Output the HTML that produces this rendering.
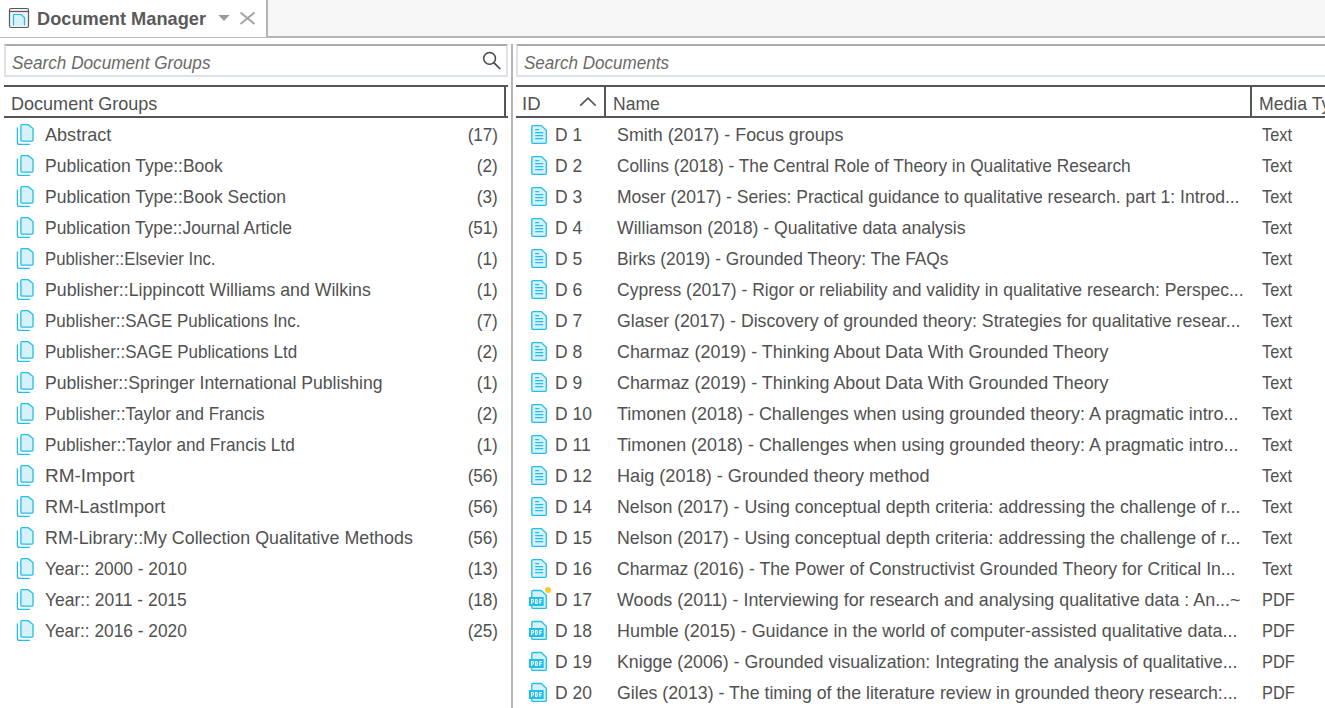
<!DOCTYPE html>
<html><head><meta charset="utf-8">
<style>
*{box-sizing:border-box;margin:0;padding:0}
html,body{width:1325px;height:708px;overflow:hidden;background:#fff;font-family:"Liberation Sans",sans-serif;color:#515151}
.abs{position:absolute}
#tabbar{left:0;top:0;width:1325px;height:38px;background:#f7f7f7}
#tab{left:0;top:0;width:268px;height:38px;background:#fff;border-right:2px solid #b4b4b4;border-bottom:1px solid #bcbcbc}
#tabline{left:268px;top:36px;width:1057px;height:2px;background:#b4b4b4}
.search{top:44px;height:33px;border:2px solid #dde2ea;border-top-color:#a9acb2;background:#fff}
.hdr{top:85px;height:33px;border-top:2px solid #555;border-bottom:2px solid #555}
.vsep{position:absolute;width:2px;height:31px;background:#555}
.t{position:absolute;white-space:nowrap;font-size:18.6px;line-height:31px;height:31px;transform-origin:0 0}
.ti{font-weight:bold;color:#5a5a5a}
.ph{font-style:italic;color:#6a6a6a}
.ic{position:absolute}
#splitter{left:511px;top:44px;width:2px;height:664px;background:#b4b4b4}
</style></head><body>
<div id="tabbar" class="abs"></div>
<div id="tab" class="abs"></div>
<div id="tabline" class="abs"></div>
<svg class="abs" style="left:0;top:0" width="40" height="38">
 <rect x="9.5" y="8.5" width="19" height="19" rx="1.5" fill="#f2f2f2" stroke="#5a5a5a" stroke-width="1.2"/>
 <line x1="9.5" y1="11.5" x2="28.5" y2="11.5" stroke="#5a5a5a" stroke-width="1.2"/>
 <path d="M13.5 25.5 V14.5 H21 L24.5 17.5 V25.5" fill="#d6f1fa" stroke="#1ec0e8" stroke-width="1.2"/>
</svg>
<svg class="abs" style="left:210px;top:0" width="56" height="38">
 <path d="M8.3 15 L19.6 15 L14 21 Z" fill="#9a9a9a"/>
 <path d="M30.5 12.5 L44.5 24 M44.5 12.5 L30.5 24" stroke="#a4a4a4" stroke-width="2"/>
</svg>
<div class="abs search" style="left:4px;width:504px"></div>
<svg class="abs" style="left:478px;top:48px" width="26" height="26">
 <circle cx="11.6" cy="10.4" r="5.9" fill="none" stroke="#444" stroke-width="1.5"/>
 <path d="M15.8 14.6 L22.2 21" stroke="#444" stroke-width="1.7"/>
</svg>
<div class="abs hdr" style="left:4px;width:504px"></div>
<div class="vsep" style="left:504px;top:86px"></div>
<div id="splitter" class="abs"></div>
<div class="abs search" style="left:516px;width:820px"></div>
<div class="abs hdr" style="left:516px;width:820px"></div>
<svg class="abs" style="left:578px;top:96px" width="20" height="14"><path d="M2.2 9.6 L10 2.2 L17.7 9.6" fill="none" stroke="#555" stroke-width="1.6"/></svg>
<div class="vsep" style="left:604px;top:86px"></div>
<div class="vsep" style="left:1250px;top:86px"></div>
<span class="t ti" style="left:37px;top:3px;transform:scaleX(0.9794);">Document Manager</span>
<span class="t ph" style="left:12px;top:47px;transform:scaleX(0.9234);">Search Document Groups</span>
<span class="t ph" style="left:524px;top:47px;transform:scaleX(0.9170);">Search Documents</span>
<span class="t" style="left:10.5px;top:88px;transform:scaleX(0.9702);">Document Groups</span>
<span class="t" style="left:522px;top:88px;transform:scaleX(1.0003);">ID</span>
<span class="t" style="left:613px;top:88px;transform:scaleX(0.9414);">Name</span>
<span class="t" style="left:1259px;top:88px;transform:scaleX(0.95)">Media Type</span>
<svg class="ic" style="left:13px;top:120px" width="22" height="26"><path d="M4.4 7.6 V22.4 Q4.4 24.4 6.4 24.4 H16.9" fill="none" stroke="#1ec0e8" stroke-width="1.3"/><path d="M7.9 5.8 Q7.9 4.7 9 4.7 H15.2 L20 8.6 V20 Q20 21.1 18.9 21.1 H9 Q7.9 21.1 7.9 20 Z" fill="#d6f1fa" stroke="#1ec0e8" stroke-width="1.3"/></svg>
<span class="t" style="left:45px;top:119px;transform:scaleX(0.9721);">Abstract</span>
<span class="t" style="right:827px;top:119px;transform-origin:100% 0;transform:scaleX(0.92)">(17)</span>
<svg class="ic" style="left:13px;top:151px" width="22" height="26"><path d="M4.4 7.6 V22.4 Q4.4 24.4 6.4 24.4 H16.9" fill="none" stroke="#1ec0e8" stroke-width="1.3"/><path d="M7.9 5.8 Q7.9 4.7 9 4.7 H15.2 L20 8.6 V20 Q20 21.1 18.9 21.1 H9 Q7.9 21.1 7.9 20 Z" fill="#d6f1fa" stroke="#1ec0e8" stroke-width="1.3"/></svg>
<span class="t" style="left:45px;top:150px;transform:scaleX(0.9416);">Publication Type::Book</span>
<span class="t" style="right:827px;top:150px;transform-origin:100% 0;transform:scaleX(0.92)">(2)</span>
<svg class="ic" style="left:13px;top:182px" width="22" height="26"><path d="M4.4 7.6 V22.4 Q4.4 24.4 6.4 24.4 H16.9" fill="none" stroke="#1ec0e8" stroke-width="1.3"/><path d="M7.9 5.8 Q7.9 4.7 9 4.7 H15.2 L20 8.6 V20 Q20 21.1 18.9 21.1 H9 Q7.9 21.1 7.9 20 Z" fill="#d6f1fa" stroke="#1ec0e8" stroke-width="1.3"/></svg>
<span class="t" style="left:45px;top:181px;transform:scaleX(0.9410);">Publication Type::Book Section</span>
<span class="t" style="right:827px;top:181px;transform-origin:100% 0;transform:scaleX(0.92)">(3)</span>
<svg class="ic" style="left:13px;top:213px" width="22" height="26"><path d="M4.4 7.6 V22.4 Q4.4 24.4 6.4 24.4 H16.9" fill="none" stroke="#1ec0e8" stroke-width="1.3"/><path d="M7.9 5.8 Q7.9 4.7 9 4.7 H15.2 L20 8.6 V20 Q20 21.1 18.9 21.1 H9 Q7.9 21.1 7.9 20 Z" fill="#d6f1fa" stroke="#1ec0e8" stroke-width="1.3"/></svg>
<span class="t" style="left:45px;top:212px;transform:scaleX(0.9384);">Publication Type::Journal Article</span>
<span class="t" style="right:827px;top:212px;transform-origin:100% 0;transform:scaleX(0.92)">(51)</span>
<svg class="ic" style="left:13px;top:244px" width="22" height="26"><path d="M4.4 7.6 V22.4 Q4.4 24.4 6.4 24.4 H16.9" fill="none" stroke="#1ec0e8" stroke-width="1.3"/><path d="M7.9 5.8 Q7.9 4.7 9 4.7 H15.2 L20 8.6 V20 Q20 21.1 18.9 21.1 H9 Q7.9 21.1 7.9 20 Z" fill="#d6f1fa" stroke="#1ec0e8" stroke-width="1.3"/></svg>
<span class="t" style="left:45px;top:243px;transform:scaleX(0.9015);">Publisher::Elsevier Inc.</span>
<span class="t" style="right:827px;top:243px;transform-origin:100% 0;transform:scaleX(0.92)">(1)</span>
<svg class="ic" style="left:13px;top:275px" width="22" height="26"><path d="M4.4 7.6 V22.4 Q4.4 24.4 6.4 24.4 H16.9" fill="none" stroke="#1ec0e8" stroke-width="1.3"/><path d="M7.9 5.8 Q7.9 4.7 9 4.7 H15.2 L20 8.6 V20 Q20 21.1 18.9 21.1 H9 Q7.9 21.1 7.9 20 Z" fill="#d6f1fa" stroke="#1ec0e8" stroke-width="1.3"/></svg>
<span class="t" style="left:45px;top:274px;transform:scaleX(0.9525);">Publisher::Lippincott Williams and Wilkins</span>
<span class="t" style="right:827px;top:274px;transform-origin:100% 0;transform:scaleX(0.92)">(1)</span>
<svg class="ic" style="left:13px;top:306px" width="22" height="26"><path d="M4.4 7.6 V22.4 Q4.4 24.4 6.4 24.4 H16.9" fill="none" stroke="#1ec0e8" stroke-width="1.3"/><path d="M7.9 5.8 Q7.9 4.7 9 4.7 H15.2 L20 8.6 V20 Q20 21.1 18.9 21.1 H9 Q7.9 21.1 7.9 20 Z" fill="#d6f1fa" stroke="#1ec0e8" stroke-width="1.3"/></svg>
<span class="t" style="left:45px;top:305px;transform:scaleX(0.9122);">Publisher::SAGE Publications Inc.</span>
<span class="t" style="right:827px;top:305px;transform-origin:100% 0;transform:scaleX(0.92)">(7)</span>
<svg class="ic" style="left:13px;top:337px" width="22" height="26"><path d="M4.4 7.6 V22.4 Q4.4 24.4 6.4 24.4 H16.9" fill="none" stroke="#1ec0e8" stroke-width="1.3"/><path d="M7.9 5.8 Q7.9 4.7 9 4.7 H15.2 L20 8.6 V20 Q20 21.1 18.9 21.1 H9 Q7.9 21.1 7.9 20 Z" fill="#d6f1fa" stroke="#1ec0e8" stroke-width="1.3"/></svg>
<span class="t" style="left:45px;top:336px;transform:scaleX(0.9139);">Publisher::SAGE Publications Ltd</span>
<span class="t" style="right:827px;top:336px;transform-origin:100% 0;transform:scaleX(0.92)">(2)</span>
<svg class="ic" style="left:13px;top:368px" width="22" height="26"><path d="M4.4 7.6 V22.4 Q4.4 24.4 6.4 24.4 H16.9" fill="none" stroke="#1ec0e8" stroke-width="1.3"/><path d="M7.9 5.8 Q7.9 4.7 9 4.7 H15.2 L20 8.6 V20 Q20 21.1 18.9 21.1 H9 Q7.9 21.1 7.9 20 Z" fill="#d6f1fa" stroke="#1ec0e8" stroke-width="1.3"/></svg>
<span class="t" style="left:45px;top:367px;transform:scaleX(0.9464);">Publisher::Springer International Publishing</span>
<span class="t" style="right:827px;top:367px;transform-origin:100% 0;transform:scaleX(0.92)">(1)</span>
<svg class="ic" style="left:13px;top:399px" width="22" height="26"><path d="M4.4 7.6 V22.4 Q4.4 24.4 6.4 24.4 H16.9" fill="none" stroke="#1ec0e8" stroke-width="1.3"/><path d="M7.9 5.8 Q7.9 4.7 9 4.7 H15.2 L20 8.6 V20 Q20 21.1 18.9 21.1 H9 Q7.9 21.1 7.9 20 Z" fill="#d6f1fa" stroke="#1ec0e8" stroke-width="1.3"/></svg>
<span class="t" style="left:45px;top:398px;transform:scaleX(0.9155);">Publisher::Taylor and Francis</span>
<span class="t" style="right:827px;top:398px;transform-origin:100% 0;transform:scaleX(0.92)">(2)</span>
<svg class="ic" style="left:13px;top:430px" width="22" height="26"><path d="M4.4 7.6 V22.4 Q4.4 24.4 6.4 24.4 H16.9" fill="none" stroke="#1ec0e8" stroke-width="1.3"/><path d="M7.9 5.8 Q7.9 4.7 9 4.7 H15.2 L20 8.6 V20 Q20 21.1 18.9 21.1 H9 Q7.9 21.1 7.9 20 Z" fill="#d6f1fa" stroke="#1ec0e8" stroke-width="1.3"/></svg>
<span class="t" style="left:45px;top:429px;transform:scaleX(0.9221);">Publisher::Taylor and Francis Ltd</span>
<span class="t" style="right:827px;top:429px;transform-origin:100% 0;transform:scaleX(0.92)">(1)</span>
<svg class="ic" style="left:13px;top:461px" width="22" height="26"><path d="M4.4 7.6 V22.4 Q4.4 24.4 6.4 24.4 H16.9" fill="none" stroke="#1ec0e8" stroke-width="1.3"/><path d="M7.9 5.8 Q7.9 4.7 9 4.7 H15.2 L20 8.6 V20 Q20 21.1 18.9 21.1 H9 Q7.9 21.1 7.9 20 Z" fill="#d6f1fa" stroke="#1ec0e8" stroke-width="1.3"/></svg>
<span class="t" style="left:45px;top:460px;transform:scaleX(1.0192);">RM-Import</span>
<span class="t" style="right:827px;top:460px;transform-origin:100% 0;transform:scaleX(0.92)">(56)</span>
<svg class="ic" style="left:13px;top:492px" width="22" height="26"><path d="M4.4 7.6 V22.4 Q4.4 24.4 6.4 24.4 H16.9" fill="none" stroke="#1ec0e8" stroke-width="1.3"/><path d="M7.9 5.8 Q7.9 4.7 9 4.7 H15.2 L20 8.6 V20 Q20 21.1 18.9 21.1 H9 Q7.9 21.1 7.9 20 Z" fill="#d6f1fa" stroke="#1ec0e8" stroke-width="1.3"/></svg>
<span class="t" style="left:45px;top:491px;transform:scaleX(0.9784);">RM-LastImport</span>
<span class="t" style="right:827px;top:491px;transform-origin:100% 0;transform:scaleX(0.92)">(56)</span>
<svg class="ic" style="left:13px;top:523px" width="22" height="26"><path d="M4.4 7.6 V22.4 Q4.4 24.4 6.4 24.4 H16.9" fill="none" stroke="#1ec0e8" stroke-width="1.3"/><path d="M7.9 5.8 Q7.9 4.7 9 4.7 H15.2 L20 8.6 V20 Q20 21.1 18.9 21.1 H9 Q7.9 21.1 7.9 20 Z" fill="#d6f1fa" stroke="#1ec0e8" stroke-width="1.3"/></svg>
<span class="t" style="left:45px;top:522px;transform:scaleX(0.9594);">RM-Library::My Collection Qualitative Methods</span>
<span class="t" style="right:827px;top:522px;transform-origin:100% 0;transform:scaleX(0.92)">(56)</span>
<svg class="ic" style="left:13px;top:554px" width="22" height="26"><path d="M4.4 7.6 V22.4 Q4.4 24.4 6.4 24.4 H16.9" fill="none" stroke="#1ec0e8" stroke-width="1.3"/><path d="M7.9 5.8 Q7.9 4.7 9 4.7 H15.2 L20 8.6 V20 Q20 21.1 18.9 21.1 H9 Q7.9 21.1 7.9 20 Z" fill="#d6f1fa" stroke="#1ec0e8" stroke-width="1.3"/></svg>
<span class="t" style="left:45px;top:553px;transform:scaleX(0.9309);">Year:: 2000 - 2010</span>
<span class="t" style="right:827px;top:553px;transform-origin:100% 0;transform:scaleX(0.92)">(13)</span>
<svg class="ic" style="left:13px;top:585px" width="22" height="26"><path d="M4.4 7.6 V22.4 Q4.4 24.4 6.4 24.4 H16.9" fill="none" stroke="#1ec0e8" stroke-width="1.3"/><path d="M7.9 5.8 Q7.9 4.7 9 4.7 H15.2 L20 8.6 V20 Q20 21.1 18.9 21.1 H9 Q7.9 21.1 7.9 20 Z" fill="#d6f1fa" stroke="#1ec0e8" stroke-width="1.3"/></svg>
<span class="t" style="left:45px;top:584px;transform:scaleX(0.9395);">Year:: 2011 - 2015</span>
<span class="t" style="right:827px;top:584px;transform-origin:100% 0;transform:scaleX(0.92)">(18)</span>
<svg class="ic" style="left:13px;top:616px" width="22" height="26"><path d="M4.4 7.6 V22.4 Q4.4 24.4 6.4 24.4 H16.9" fill="none" stroke="#1ec0e8" stroke-width="1.3"/><path d="M7.9 5.8 Q7.9 4.7 9 4.7 H15.2 L20 8.6 V20 Q20 21.1 18.9 21.1 H9 Q7.9 21.1 7.9 20 Z" fill="#d6f1fa" stroke="#1ec0e8" stroke-width="1.3"/></svg>
<span class="t" style="left:45px;top:615px;transform:scaleX(0.9309);">Year:: 2016 - 2020</span>
<span class="t" style="right:827px;top:615px;transform-origin:100% 0;transform:scaleX(0.92)">(25)</span>
<svg class="ic" style="left:529.5px;top:124px" width="20" height="22"><path d="M1.8 2.6 Q1.8 1.6 2.8 1.6 H11.4 L16.3 6.2 V18.3 Q16.3 19.3 15.3 19.3 H2.8 Q1.8 19.3 1.8 18.3 Z" fill="#d6f1fa" stroke="#1ec0e8" stroke-width="1.3"/><path d="M5.2 5.7 H9.2 M5.2 8.7 H13.2 M5.2 11.7 H13.2 M5.2 14.7 H13.2" stroke="#1ec0e8" stroke-width="1.2"/></svg>
<span class="t" style="left:555px;top:119px;transform:scaleX(0.94)">D 1</span>
<span class="t" style="left:617px;top:119px;transform:scaleX(0.9613);">Smith (2017) - Focus groups</span>
<span class="t" style="left:1262px;top:119px;transform:scaleX(0.88)">Text</span>
<svg class="ic" style="left:529.5px;top:155px" width="20" height="22"><path d="M1.8 2.6 Q1.8 1.6 2.8 1.6 H11.4 L16.3 6.2 V18.3 Q16.3 19.3 15.3 19.3 H2.8 Q1.8 19.3 1.8 18.3 Z" fill="#d6f1fa" stroke="#1ec0e8" stroke-width="1.3"/><path d="M5.2 5.7 H9.2 M5.2 8.7 H13.2 M5.2 11.7 H13.2 M5.2 14.7 H13.2" stroke="#1ec0e8" stroke-width="1.2"/></svg>
<span class="t" style="left:555px;top:150px;transform:scaleX(0.94)">D 2</span>
<span class="t" style="left:617px;top:150px;transform:scaleX(0.9302);">Collins (2018) - The Central Role of Theory in Qualitative Research</span>
<span class="t" style="left:1262px;top:150px;transform:scaleX(0.88)">Text</span>
<svg class="ic" style="left:529.5px;top:186px" width="20" height="22"><path d="M1.8 2.6 Q1.8 1.6 2.8 1.6 H11.4 L16.3 6.2 V18.3 Q16.3 19.3 15.3 19.3 H2.8 Q1.8 19.3 1.8 18.3 Z" fill="#d6f1fa" stroke="#1ec0e8" stroke-width="1.3"/><path d="M5.2 5.7 H9.2 M5.2 8.7 H13.2 M5.2 11.7 H13.2 M5.2 14.7 H13.2" stroke="#1ec0e8" stroke-width="1.2"/></svg>
<span class="t" style="left:555px;top:181px;transform:scaleX(0.94)">D 3</span>
<span class="t" style="left:617px;top:181px;transform:scaleX(0.9426);">Moser (2017) - Series: Practical guidance to qualitative research. part 1: Introd...</span>
<span class="t" style="left:1262px;top:181px;transform:scaleX(0.88)">Text</span>
<svg class="ic" style="left:529.5px;top:217px" width="20" height="22"><path d="M1.8 2.6 Q1.8 1.6 2.8 1.6 H11.4 L16.3 6.2 V18.3 Q16.3 19.3 15.3 19.3 H2.8 Q1.8 19.3 1.8 18.3 Z" fill="#d6f1fa" stroke="#1ec0e8" stroke-width="1.3"/><path d="M5.2 5.7 H9.2 M5.2 8.7 H13.2 M5.2 11.7 H13.2 M5.2 14.7 H13.2" stroke="#1ec0e8" stroke-width="1.2"/></svg>
<span class="t" style="left:555px;top:212px;transform:scaleX(0.94)">D 4</span>
<span class="t" style="left:617px;top:212px;transform:scaleX(0.9499);">Williamson (2018) - Qualitative data analysis</span>
<span class="t" style="left:1262px;top:212px;transform:scaleX(0.88)">Text</span>
<svg class="ic" style="left:529.5px;top:248px" width="20" height="22"><path d="M1.8 2.6 Q1.8 1.6 2.8 1.6 H11.4 L16.3 6.2 V18.3 Q16.3 19.3 15.3 19.3 H2.8 Q1.8 19.3 1.8 18.3 Z" fill="#d6f1fa" stroke="#1ec0e8" stroke-width="1.3"/><path d="M5.2 5.7 H9.2 M5.2 8.7 H13.2 M5.2 11.7 H13.2 M5.2 14.7 H13.2" stroke="#1ec0e8" stroke-width="1.2"/></svg>
<span class="t" style="left:555px;top:243px;transform:scaleX(0.94)">D 5</span>
<span class="t" style="left:617px;top:243px;transform:scaleX(0.9315);">Birks (2019) - Grounded Theory: The FAQs</span>
<span class="t" style="left:1262px;top:243px;transform:scaleX(0.88)">Text</span>
<svg class="ic" style="left:529.5px;top:279px" width="20" height="22"><path d="M1.8 2.6 Q1.8 1.6 2.8 1.6 H11.4 L16.3 6.2 V18.3 Q16.3 19.3 15.3 19.3 H2.8 Q1.8 19.3 1.8 18.3 Z" fill="#d6f1fa" stroke="#1ec0e8" stroke-width="1.3"/><path d="M5.2 5.7 H9.2 M5.2 8.7 H13.2 M5.2 11.7 H13.2 M5.2 14.7 H13.2" stroke="#1ec0e8" stroke-width="1.2"/></svg>
<span class="t" style="left:555px;top:274px;transform:scaleX(0.94)">D 6</span>
<span class="t" style="left:617px;top:274px;transform:scaleX(0.9414);">Cypress (2017) - Rigor or reliability and validity in qualitative research: Perspec...</span>
<span class="t" style="left:1262px;top:274px;transform:scaleX(0.88)">Text</span>
<svg class="ic" style="left:529.5px;top:310px" width="20" height="22"><path d="M1.8 2.6 Q1.8 1.6 2.8 1.6 H11.4 L16.3 6.2 V18.3 Q16.3 19.3 15.3 19.3 H2.8 Q1.8 19.3 1.8 18.3 Z" fill="#d6f1fa" stroke="#1ec0e8" stroke-width="1.3"/><path d="M5.2 5.7 H9.2 M5.2 8.7 H13.2 M5.2 11.7 H13.2 M5.2 14.7 H13.2" stroke="#1ec0e8" stroke-width="1.2"/></svg>
<span class="t" style="left:555px;top:305px;transform:scaleX(0.94)">D 7</span>
<span class="t" style="left:617px;top:305px;transform:scaleX(0.9516);">Glaser (2017) - Discovery of grounded theory: Strategies for qualitative resear...</span>
<span class="t" style="left:1262px;top:305px;transform:scaleX(0.88)">Text</span>
<svg class="ic" style="left:529.5px;top:341px" width="20" height="22"><path d="M1.8 2.6 Q1.8 1.6 2.8 1.6 H11.4 L16.3 6.2 V18.3 Q16.3 19.3 15.3 19.3 H2.8 Q1.8 19.3 1.8 18.3 Z" fill="#d6f1fa" stroke="#1ec0e8" stroke-width="1.3"/><path d="M5.2 5.7 H9.2 M5.2 8.7 H13.2 M5.2 11.7 H13.2 M5.2 14.7 H13.2" stroke="#1ec0e8" stroke-width="1.2"/></svg>
<span class="t" style="left:555px;top:336px;transform:scaleX(0.94)">D 8</span>
<span class="t" style="left:617px;top:336px;transform:scaleX(0.9620);">Charmaz (2019) - Thinking About Data With Grounded Theory</span>
<span class="t" style="left:1262px;top:336px;transform:scaleX(0.88)">Text</span>
<svg class="ic" style="left:529.5px;top:372px" width="20" height="22"><path d="M1.8 2.6 Q1.8 1.6 2.8 1.6 H11.4 L16.3 6.2 V18.3 Q16.3 19.3 15.3 19.3 H2.8 Q1.8 19.3 1.8 18.3 Z" fill="#d6f1fa" stroke="#1ec0e8" stroke-width="1.3"/><path d="M5.2 5.7 H9.2 M5.2 8.7 H13.2 M5.2 11.7 H13.2 M5.2 14.7 H13.2" stroke="#1ec0e8" stroke-width="1.2"/></svg>
<span class="t" style="left:555px;top:367px;transform:scaleX(0.94)">D 9</span>
<span class="t" style="left:617px;top:367px;transform:scaleX(0.9620);">Charmaz (2019) - Thinking About Data With Grounded Theory</span>
<span class="t" style="left:1262px;top:367px;transform:scaleX(0.88)">Text</span>
<svg class="ic" style="left:529.5px;top:403px" width="20" height="22"><path d="M1.8 2.6 Q1.8 1.6 2.8 1.6 H11.4 L16.3 6.2 V18.3 Q16.3 19.3 15.3 19.3 H2.8 Q1.8 19.3 1.8 18.3 Z" fill="#d6f1fa" stroke="#1ec0e8" stroke-width="1.3"/><path d="M5.2 5.7 H9.2 M5.2 8.7 H13.2 M5.2 11.7 H13.2 M5.2 14.7 H13.2" stroke="#1ec0e8" stroke-width="1.2"/></svg>
<span class="t" style="left:555px;top:398px;transform:scaleX(0.94)">D 10</span>
<span class="t" style="left:617px;top:398px;transform:scaleX(0.9647);">Timonen (2018) - Challenges when using grounded theory: A pragmatic intro...</span>
<span class="t" style="left:1262px;top:398px;transform:scaleX(0.88)">Text</span>
<svg class="ic" style="left:529.5px;top:434px" width="20" height="22"><path d="M1.8 2.6 Q1.8 1.6 2.8 1.6 H11.4 L16.3 6.2 V18.3 Q16.3 19.3 15.3 19.3 H2.8 Q1.8 19.3 1.8 18.3 Z" fill="#d6f1fa" stroke="#1ec0e8" stroke-width="1.3"/><path d="M5.2 5.7 H9.2 M5.2 8.7 H13.2 M5.2 11.7 H13.2 M5.2 14.7 H13.2" stroke="#1ec0e8" stroke-width="1.2"/></svg>
<span class="t" style="left:555px;top:429px;transform:scaleX(0.94)">D 11</span>
<span class="t" style="left:617px;top:429px;transform:scaleX(0.9647);">Timonen (2018) - Challenges when using grounded theory: A pragmatic intro...</span>
<span class="t" style="left:1262px;top:429px;transform:scaleX(0.88)">Text</span>
<svg class="ic" style="left:529.5px;top:465px" width="20" height="22"><path d="M1.8 2.6 Q1.8 1.6 2.8 1.6 H11.4 L16.3 6.2 V18.3 Q16.3 19.3 15.3 19.3 H2.8 Q1.8 19.3 1.8 18.3 Z" fill="#d6f1fa" stroke="#1ec0e8" stroke-width="1.3"/><path d="M5.2 5.7 H9.2 M5.2 8.7 H13.2 M5.2 11.7 H13.2 M5.2 14.7 H13.2" stroke="#1ec0e8" stroke-width="1.2"/></svg>
<span class="t" style="left:555px;top:460px;transform:scaleX(0.94)">D 12</span>
<span class="t" style="left:617px;top:460px;transform:scaleX(0.9753);">Haig (2018) - Grounded theory method</span>
<span class="t" style="left:1262px;top:460px;transform:scaleX(0.88)">Text</span>
<svg class="ic" style="left:529.5px;top:496px" width="20" height="22"><path d="M1.8 2.6 Q1.8 1.6 2.8 1.6 H11.4 L16.3 6.2 V18.3 Q16.3 19.3 15.3 19.3 H2.8 Q1.8 19.3 1.8 18.3 Z" fill="#d6f1fa" stroke="#1ec0e8" stroke-width="1.3"/><path d="M5.2 5.7 H9.2 M5.2 8.7 H13.2 M5.2 11.7 H13.2 M5.2 14.7 H13.2" stroke="#1ec0e8" stroke-width="1.2"/></svg>
<span class="t" style="left:555px;top:491px;transform:scaleX(0.94)">D 14</span>
<span class="t" style="left:617px;top:491px;transform:scaleX(0.9560);">Nelson (2017) - Using conceptual depth criteria: addressing the challenge of r...</span>
<span class="t" style="left:1262px;top:491px;transform:scaleX(0.88)">Text</span>
<svg class="ic" style="left:529.5px;top:527px" width="20" height="22"><path d="M1.8 2.6 Q1.8 1.6 2.8 1.6 H11.4 L16.3 6.2 V18.3 Q16.3 19.3 15.3 19.3 H2.8 Q1.8 19.3 1.8 18.3 Z" fill="#d6f1fa" stroke="#1ec0e8" stroke-width="1.3"/><path d="M5.2 5.7 H9.2 M5.2 8.7 H13.2 M5.2 11.7 H13.2 M5.2 14.7 H13.2" stroke="#1ec0e8" stroke-width="1.2"/></svg>
<span class="t" style="left:555px;top:522px;transform:scaleX(0.94)">D 15</span>
<span class="t" style="left:617px;top:522px;transform:scaleX(0.9560);">Nelson (2017) - Using conceptual depth criteria: addressing the challenge of r...</span>
<span class="t" style="left:1262px;top:522px;transform:scaleX(0.88)">Text</span>
<svg class="ic" style="left:529.5px;top:558px" width="20" height="22"><path d="M1.8 2.6 Q1.8 1.6 2.8 1.6 H11.4 L16.3 6.2 V18.3 Q16.3 19.3 15.3 19.3 H2.8 Q1.8 19.3 1.8 18.3 Z" fill="#d6f1fa" stroke="#1ec0e8" stroke-width="1.3"/><path d="M5.2 5.7 H9.2 M5.2 8.7 H13.2 M5.2 11.7 H13.2 M5.2 14.7 H13.2" stroke="#1ec0e8" stroke-width="1.2"/></svg>
<span class="t" style="left:555px;top:553px;transform:scaleX(0.94)">D 16</span>
<span class="t" style="left:617px;top:553px;transform:scaleX(0.9465);">Charmaz (2016) - The Power of Constructivist Grounded Theory for Critical In...</span>
<span class="t" style="left:1262px;top:553px;transform:scaleX(0.88)">Text</span>
<svg class="ic" style="left:527px;top:585px" width="24" height="24"><path d="M4.8 6.4 Q4.8 5.5 5.7 5.5 H14.2 L19.3 10.4 V22.4 Q19.3 23.3 18.4 23.3 H5.7 Q4.8 23.3 4.8 22.4 Z" fill="#d6f1fa" stroke="#1ec0e8" stroke-width="1.3"/><rect x="1.9" y="12" width="14.8" height="9" fill="#1ec0e8"/><path d="M4.55 19 V14.55 H5.9 Q6.6 14.55 6.6 15.6 V16 Q6.6 17 5.9 17 H4.55 M8.55 14.55 V18.45 H9.6 Q10.3 18.45 10.3 17.5 V15.5 Q10.3 14.55 9.6 14.55 Z M12.85 19 V14.55 H15 M12.85 16.6 H14.7" fill="none" stroke="#fff" stroke-width="1.1"/><circle cx="21" cy="4.9" r="3" fill="#fcc82a"/></svg>
<span class="t" style="left:555px;top:584px;transform:scaleX(0.94)">D 17</span>
<span class="t" style="left:617px;top:584px;transform:scaleX(0.9608);">Woods (2011) - Interviewing for research and analysing qualitative data : An...~</span>
<span class="t" style="left:1262px;top:584px;transform:scaleX(0.88)">PDF</span>
<svg class="ic" style="left:527px;top:616px" width="24" height="24"><path d="M4.8 6.4 Q4.8 5.5 5.7 5.5 H14.2 L19.3 10.4 V22.4 Q19.3 23.3 18.4 23.3 H5.7 Q4.8 23.3 4.8 22.4 Z" fill="#d6f1fa" stroke="#1ec0e8" stroke-width="1.3"/><rect x="1.9" y="12" width="14.8" height="9" fill="#1ec0e8"/><path d="M4.55 19 V14.55 H5.9 Q6.6 14.55 6.6 15.6 V16 Q6.6 17 5.9 17 H4.55 M8.55 14.55 V18.45 H9.6 Q10.3 18.45 10.3 17.5 V15.5 Q10.3 14.55 9.6 14.55 Z M12.85 19 V14.55 H15 M12.85 16.6 H14.7" fill="none" stroke="#fff" stroke-width="1.1"/></svg>
<span class="t" style="left:555px;top:615px;transform:scaleX(0.94)">D 18</span>
<span class="t" style="left:617px;top:615px;transform:scaleX(0.9652);">Humble (2015) - Guidance in the world of computer-assisted qualitative data...</span>
<span class="t" style="left:1262px;top:615px;transform:scaleX(0.88)">PDF</span>
<svg class="ic" style="left:527px;top:647px" width="24" height="24"><path d="M4.8 6.4 Q4.8 5.5 5.7 5.5 H14.2 L19.3 10.4 V22.4 Q19.3 23.3 18.4 23.3 H5.7 Q4.8 23.3 4.8 22.4 Z" fill="#d6f1fa" stroke="#1ec0e8" stroke-width="1.3"/><rect x="1.9" y="12" width="14.8" height="9" fill="#1ec0e8"/><path d="M4.55 19 V14.55 H5.9 Q6.6 14.55 6.6 15.6 V16 Q6.6 17 5.9 17 H4.55 M8.55 14.55 V18.45 H9.6 Q10.3 18.45 10.3 17.5 V15.5 Q10.3 14.55 9.6 14.55 Z M12.85 19 V14.55 H15 M12.85 16.6 H14.7" fill="none" stroke="#fff" stroke-width="1.1"/></svg>
<span class="t" style="left:555px;top:646px;transform:scaleX(0.94)">D 19</span>
<span class="t" style="left:617px;top:646px;transform:scaleX(0.9559);">Knigge (2006) - Grounded visualization: Integrating the analysis of qualitative...</span>
<span class="t" style="left:1262px;top:646px;transform:scaleX(0.88)">PDF</span>
<svg class="ic" style="left:527px;top:678px" width="24" height="24"><path d="M4.8 6.4 Q4.8 5.5 5.7 5.5 H14.2 L19.3 10.4 V22.4 Q19.3 23.3 18.4 23.3 H5.7 Q4.8 23.3 4.8 22.4 Z" fill="#d6f1fa" stroke="#1ec0e8" stroke-width="1.3"/><rect x="1.9" y="12" width="14.8" height="9" fill="#1ec0e8"/><path d="M4.55 19 V14.55 H5.9 Q6.6 14.55 6.6 15.6 V16 Q6.6 17 5.9 17 H4.55 M8.55 14.55 V18.45 H9.6 Q10.3 18.45 10.3 17.5 V15.5 Q10.3 14.55 9.6 14.55 Z M12.85 19 V14.55 H15 M12.85 16.6 H14.7" fill="none" stroke="#fff" stroke-width="1.1"/></svg>
<span class="t" style="left:555px;top:677px;transform:scaleX(0.94)">D 20</span>
<span class="t" style="left:617px;top:677px;transform:scaleX(0.9535);">Giles (2013) - The timing of the literature review in grounded theory research:...</span>
<span class="t" style="left:1262px;top:677px;transform:scaleX(0.88)">PDF</span>
</body></html>
